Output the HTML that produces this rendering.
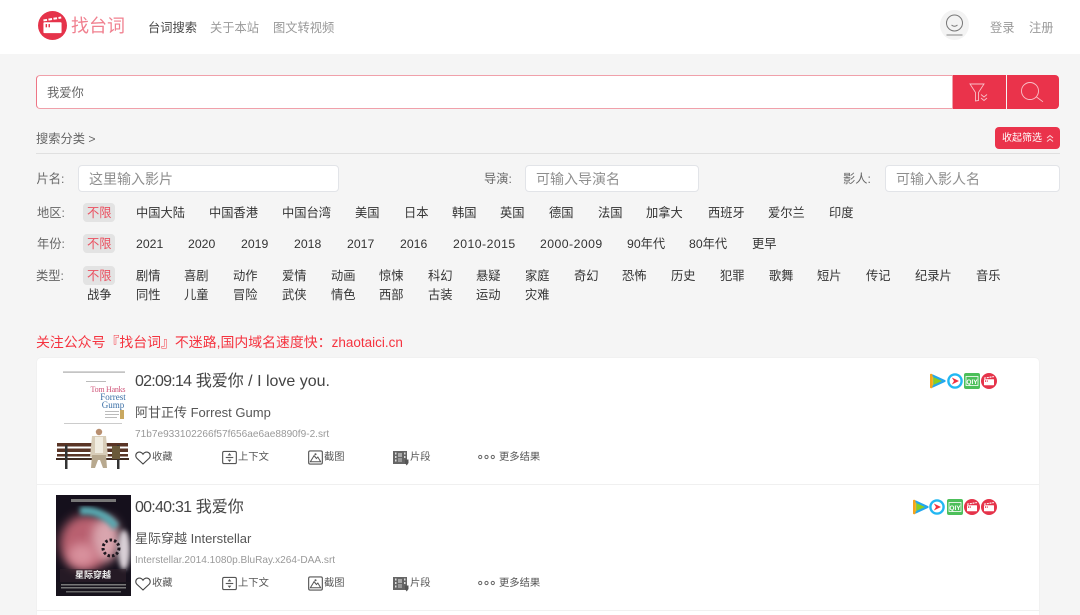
<!DOCTYPE html>
<html lang="zh"><head><meta charset="utf-8"><title>找台词</title>
<style>
html,body{margin:0;padding:0;width:1080px;height:615px;overflow:hidden}
body{background:#f5f5f5;position:relative;font-family:"Liberation Sans","Noto Sans CJK SC",sans-serif;font-size:12.25px;color:#333}
#w{position:absolute;left:0;top:0;width:1080px;height:615px;overflow:hidden;filter:blur(.3px)}
.a{position:absolute}
.t{position:absolute;white-space:nowrap;line-height:20px;height:20px}
.l{color:#666}
.n{color:#999}
.in{position:absolute;top:165px;height:25px;background:#fff;border:1px solid #e2e4e8;border-radius:4px;line-height:27px;font-size:14px;color:#8f8f8f;padding-left:10px;box-sizing:content-box}
.ttl{font-size:16px;color:#444}
.ttl b{font-weight:normal;letter-spacing:-.75px}
.sub{font-size:13px;color:#555}
.srt{font-size:10.1px;color:#999}
.act{font-size:10.3px;color:#555}
.rng{letter-spacing:.45px}
svg{position:absolute;display:block;overflow:visible}
</style></head><body><div id="w">
<svg width="0" height="0" style="position:absolute">
<defs>
<symbol id="clap" viewBox="0 0 16 16"><circle cx="8" cy="8" r="8" fill="#e5334a"/><rect x="3" y="6.200" width="10" height="6" rx=".5" fill="#fff"/><path d="M3 5.200L12.800 3.600" stroke="#fff" stroke-width="1.100" stroke-dasharray="2 .8"/><rect x="4.200" y="7.200" width=".8" height="1.800" fill="#e5334a"/><rect x="5.800" y="7.200" width=".8" height="1.800" fill="#e5334a"/></symbol>
<symbol id="tx" viewBox="0 0 16 16"><path d="M2.500 2.500L14.500 8L2.500 13.500Z" fill="#8ccf1f" stroke="#22a7ee" stroke-width="2.200" stroke-linejoin="round"/><path d="M1.200 2V14" stroke="#f7a31c" stroke-width="2.600" stroke-linecap="round"/><path d="M2.800 3.500V12.500" stroke="#f7c31c" stroke-width="1"/></symbol>
<symbol id="yk" viewBox="0 0 16 16"><circle cx="8" cy="8" r="6.600" fill="#fff" stroke="#21b7f2" stroke-width="2.400"/><path d="M4.800 4.500L12 8L4.800 11.500L7 8Z" fill="#f0303f"/></symbol>
<symbol id="iq" viewBox="0 0 16 16"><rect width="16" height="16" rx="2" fill="#4cbf5a"/><rect x="2" y="3.500" width="12" height="9" fill="none" stroke="#fff" stroke-width=".8"/><text x="8" y="10.800" font-size="6.500" font-weight="bold" fill="#fff" text-anchor="middle" font-family="Liberation Sans">QIY</text></symbol>
<symbol id="heart" viewBox="0 0 16 14"><path d="M8 13L2 7.400C.2 5.600.5 2.800 2.400 1.600 4.300.5 6.700 1 8 3.200 9.300 1 11.700.5 13.600 1.600 15.500 2.800 15.800 5.600 14 7.400Z" fill="none" stroke="#444" stroke-width="1.100"/></symbol>
<symbol id="ctx" viewBox="0 0 16 16"><rect x=".7" y="1.500" width="14.600" height="13" rx="1.500" fill="none" stroke="#555" stroke-width="1.200"/><path d="M4 8H12" stroke="#555" stroke-width="1.200"/><path d="M8 3.200L10 5.800H6ZM8 12.800L10 10.200H6Z" fill="#555"/></symbol>
<symbol id="pic" viewBox="0 0 16 16"><rect x=".7" y="1" width="14.600" height="14" rx="1.500" fill="none" stroke="#555" stroke-width="1.200"/><path d="M2.500 12.500L6.500 6L9 9L10.500 7.500L13.500 12.500Z" fill="none" stroke="#555" stroke-width="1.100"/><circle cx="8" cy="4.500" r="1.100" fill="#555"/></symbol>
<symbol id="film" viewBox="0 0 16 16"><rect x="0" y="1" width="14" height="13" fill="#666"/><path d="M2 2.500h1.500v2H2zM2 6h1.500v2H2zM2 9.500h1.500v2H2zM11 2.500h1.500v2H11zM11 6h1.500v2H11z" fill="#ddd"/><rect x="5" y="3" width="4" height="4" fill="#aaa"/><rect x="5" y="8" width="4" height="4" fill="#999"/><path d="M12 9.500h3.500v3.500l-1.800 2.500-1.700-2.500z" fill="#555"/></symbol>
<symbol id="dots" viewBox="0 0 17 6"><circle cx="2.200" cy="3" r="1.600" fill="none" stroke="#666"/><circle cx="8.500" cy="3" r="1.600" fill="none" stroke="#666"/><circle cx="14.800" cy="3" r="1.600" fill="none" stroke="#666"/></symbol>
<filter id="b2" x="-30%" y="-30%" width="160%" height="160%"><feGaussianBlur stdDeviation="5"/></filter>
<filter id="b1" x="-30%" y="-30%" width="160%" height="160%"><feGaussianBlur stdDeviation="2.500"/></filter>
<clipPath id="pc"><rect width="75" height="101"/></clipPath>
</defs></svg>

<!-- header -->
<div class="a" style="left:0;top:0;width:1080px;height:54px;background:#fff"></div>
<svg style="left:38px;top:11px" width="29" height="29" viewBox="0 0 16 16"><use href="#clap"/></svg>
<div class="t" style="left:71px;top:16px;font-size:18px;color:#f0808f">找台词</div>
<div class="t" style="left:148px;top:18px;color:#444">台词搜索</div>
<div class="t n" style="left:210px;top:18px">关于本站</div>
<div class="t n" style="left:273px;top:18px">图文转视频</div>
<div class="a" style="left:940px;top:10px;width:29px;height:30px;border-radius:50%;background:#f3f3f3"></div>
<svg style="left:940px;top:10px" width="29" height="30" viewBox="0 0 29 30"><circle cx="14.500" cy="13" r="8" fill="none" stroke="#777"/><path d="M11.500 15Q14.500 17.500 17.500 15" fill="none" stroke="#777"/><path d="M6.500 25H22.500" stroke="#999" stroke-width="1.200"/></svg>
<div class="t n" style="left:990px;top:18px">登录</div>
<div class="t n" style="left:1029px;top:18px">注册</div>

<!-- search -->
<div class="a" style="left:36px;top:75px;width:917px;height:34px;box-sizing:border-box;background:#fff;border:1px solid #f0a0aa;border-left-color:#ee7585;border-radius:4px 0 0 4px"></div>
<div class="t" style="left:47px;top:83px;color:#666">我爱你</div>
<div class="a" style="left:953px;top:75px;width:52.500px;height:34px;background:#ea334b"></div>
<div class="a" style="left:1007px;top:75px;width:52px;height:34px;background:#ea334b;border-radius:0 4px 4px 0"></div>
<svg style="left:953px;top:75px" width="53" height="34" viewBox="0 0 53 34"><path d="M17 9H31L25.500 17.500V25.500L22.500 26V17.500Z" fill="none" stroke="#f9c0c8" stroke-width=".9"/><path d="M28 19.500L31 22L34 19.500M28 23L31 25.500L34 23" fill="none" stroke="#f9c0c8" stroke-width=".9"/></svg>
<svg style="left:1007px;top:75px" width="52" height="34" viewBox="0 0 52 34"><circle cx="23" cy="16" r="8.500" fill="none" stroke="#f9c0c8" stroke-width=".9"/><path d="M29.500 22L36 26.800" stroke="#f9c0c8" stroke-width=".9"/></svg>

<div class="t" style="left:36px;top:129px;color:#666">搜索分类 &gt;</div>
<div class="a" style="left:995px;top:127px;width:65px;height:22px;background:#ea334b;border-radius:4px"></div>
<div class="t" style="left:1002px;top:129px;font-size:10px;color:#fff">收起筛选</div>
<svg style="left:1045px;top:134px" width="10" height="9" viewBox="0 0 10 9"><path d="M2 4L5 1.500L8 4M2 7.500L5 5L8 7.500" fill="none" stroke="#fbd5da"/></svg>
<div class="a" style="left:36px;top:153px;width:1024px;height:1px;background:#e0e0e0"></div>

<!-- filter inputs -->
<div class="t l" style="left:36.500px;top:169px">片名:</div>
<div class="in" style="left:78px;width:249px">这里输入影片</div>
<div class="t l" style="left:484px;top:169px">导演:</div>
<div class="in" style="left:525px;width:162px">可输入导演名</div>
<div class="t l" style="left:843px;top:169px">影人:</div>
<div class="in" style="left:885px;width:163px">可输入影人名</div>

<!-- region -->
<div class="t l" style="left:37px;top:203px">地区:</div>
<div class="a" style="left:83px;top:203px;width:32px;height:19px;background:#e3e3e3;border-radius:4px"></div>
<div class="t" style="left:87px;top:203px;color:#ea5060">不限</div>
<div class="t" style="left:136px;top:203px">中国大陆</div>
<div class="t" style="left:209px;top:203px">中国香港</div>
<div class="t" style="left:282px;top:203px">中国台湾</div>
<div class="t" style="left:355px;top:203px">美国</div>
<div class="t" style="left:404px;top:203px">日本</div>
<div class="t" style="left:452px;top:203px">韩国</div>
<div class="t" style="left:500px;top:203px">英国</div>
<div class="t" style="left:549px;top:203px">德国</div>
<div class="t" style="left:598px;top:203px">法国</div>
<div class="t" style="left:646px;top:203px">加拿大</div>
<div class="t" style="left:708px;top:203px">西班牙</div>
<div class="t" style="left:768px;top:203px">爱尔兰</div>
<div class="t" style="left:829px;top:203px">印度</div>

<!-- year -->
<div class="t l" style="left:37px;top:234px">年份:</div>
<div class="a" style="left:83px;top:234px;width:32px;height:19px;background:#e3e3e3;border-radius:4px"></div>
<div class="t" style="left:87px;top:234px;color:#ea5060">不限</div>
<div class="t" style="left:136px;top:234px">2021</div>
<div class="t" style="left:188px;top:234px">2020</div>
<div class="t" style="left:241px;top:234px">2019</div>
<div class="t" style="left:294px;top:234px">2018</div>
<div class="t" style="left:347px;top:234px">2017</div>
<div class="t" style="left:400px;top:234px">2016</div>
<div class="t rng" style="left:453px;top:234px">2010-2015</div>
<div class="t rng" style="left:540px;top:234px">2000-2009</div>
<div class="t" style="left:627px;top:234px">90年代</div>
<div class="t" style="left:689px;top:234px">80年代</div>
<div class="t" style="left:752px;top:234px">更早</div>

<!-- genre -->
<div class="t l" style="left:36px;top:266px">类型:</div>
<div class="a" style="left:83px;top:266px;width:32px;height:19px;background:#e3e3e3;border-radius:4px"></div>
<div class="t" style="left:87px;top:266px;color:#ea5060">不限</div>
<div class="t" style="left:136px;top:266px">剧情</div>
<div class="t" style="left:184px;top:266px">喜剧</div>
<div class="t" style="left:233px;top:266px">动作</div>
<div class="t" style="left:282px;top:266px">爱情</div>
<div class="t" style="left:331px;top:266px">动画</div>
<div class="t" style="left:379px;top:266px">惊悚</div>
<div class="t" style="left:428px;top:266px">科幻</div>
<div class="t" style="left:476px;top:266px">悬疑</div>
<div class="t" style="left:525px;top:266px">家庭</div>
<div class="t" style="left:574px;top:266px">奇幻</div>
<div class="t" style="left:622px;top:266px">恐怖</div>
<div class="t" style="left:671px;top:266px">历史</div>
<div class="t" style="left:720px;top:266px">犯罪</div>
<div class="t" style="left:769px;top:266px">歌舞</div>
<div class="t" style="left:817px;top:266px">短片</div>
<div class="t" style="left:866px;top:266px">传记</div>
<div class="t" style="left:915px;top:266px">纪录片</div>
<div class="t" style="left:976px;top:266px">音乐</div>
<div class="t" style="left:87px;top:285px">战争</div>
<div class="t" style="left:136px;top:285px">同性</div>
<div class="t" style="left:184px;top:285px">儿童</div>
<div class="t" style="left:233px;top:285px">冒险</div>
<div class="t" style="left:282px;top:285px">武侠</div>
<div class="t" style="left:331px;top:285px">情色</div>
<div class="t" style="left:379px;top:285px">西部</div>
<div class="t" style="left:428px;top:285px">古装</div>
<div class="t" style="left:476px;top:285px">运动</div>
<div class="t" style="left:525px;top:285px">灾难</div>

<div class="t" style="left:36px;top:332px;font-size:13.900px;color:#f5333f">关注公众号『找台词』不迷路,国内域名速度快：<span style="font-size:13.500px">zhaotaici.cn</span></div>

<!-- results card -->
<div class="a" style="left:37px;top:358px;width:1002px;height:257px;background:#fff;border-radius:4px 4px 0 0;box-shadow:0 0 1px #ddd"></div>
<div class="a" style="left:37px;top:484px;width:1002px;height:1px;background:#f0f0f0"></div>
<div class="a" style="left:37px;top:610px;width:1002px;height:1px;background:#f0f0f0"></div>

<!-- poster 1 -->
<svg style="left:56px;top:369px" width="75" height="101" viewBox="0 0 75 101">
<rect width="75" height="101" fill="#fff"/>
<rect x="7" y="2.500" width="62" height="1.200" fill="#aaa"/>
<rect x="30" y="12" width="20" height="1" fill="#bbb"/>
<text x="52" y="23" font-size="8" font-family="Liberation Serif" fill="#d0567a" text-anchor="middle" textLength="35">Tom Hanks</text>
<text x="57" y="31" font-size="9" font-family="Liberation Serif" fill="#3a6ea5" text-anchor="middle">Forrest</text>
<text x="57" y="39" font-size="9" font-family="Liberation Serif" fill="#3a6ea5" text-anchor="middle">Gump</text>
<rect x="49" y="42" width="14" height="1" fill="#bbb"/><rect x="49" y="45" width="14" height="1" fill="#bbb"/><rect x="49" y="48" width="12" height="1" fill="#bbb"/>
<rect x="64" y="41" width="4" height="9" fill="#c9a860"/>
<rect x="8" y="54" width="58" height="1" fill="#ccc"/>
<rect x="1" y="74" width="71" height="3.500" fill="#5a3526"/><rect x="1" y="79.500" width="71" height="3.500" fill="#5a3526"/><rect x="1" y="85" width="71" height="2.500" fill="#5a3526"/>
<rect x="0" y="89" width="73" height="2" fill="#3f2a20"/>
<rect x="9" y="76" width="2.500" height="24" fill="#333"/><rect x="61" y="76" width="2.500" height="24" fill="#333"/>
<rect x="56" y="77" width="8" height="13" fill="#6a5a3a"/>
<circle cx="43" cy="63" r="3.200" fill="#b88f70"/>
<path d="M36 67H50L52 88H34Z" fill="#d8cdb8"/>
<rect x="39" y="68" width="8" height="16" fill="#f0ece0"/>
<path d="M36 86H50L51 99H47L44 91H42L39 99H35Z" fill="#b8a98f"/>
</svg>

<div class="t ttl" style="left:135px;top:372px"><b>02:09:14</b> 我爱你 / I love you.</div>
<div class="t sub" style="left:135px;top:403px">阿甘正传 Forrest Gump</div>
<div class="t srt" style="left:135px;top:425px">71b7e933102266f57f656ae6ae8890f9-2.srt</div>

<svg style="left:135px;top:451px" width="16" height="14"><use href="#heart"/></svg>
<div class="t act" style="left:152px;top:448px">收藏</div>
<svg style="left:222px;top:450px" width="15" height="15"><use href="#ctx"/></svg>
<div class="t act" style="left:238px;top:448px">上下文</div>
<svg style="left:308px;top:450px" width="15" height="15"><use href="#pic"/></svg>
<div class="t act" style="left:324px;top:448px">截图</div>
<svg style="left:393px;top:450px" width="16" height="16"><use href="#film"/></svg>
<div class="t act" style="left:410px;top:448px">片段</div>
<svg style="left:478px;top:454px" width="17" height="6"><use href="#dots"/></svg>
<div class="t act" style="left:499px;top:448px">更多结果</div>

<svg style="left:930px;top:373px" width="16" height="16"><use href="#tx"/></svg>
<svg style="left:947px;top:373px" width="16" height="16"><use href="#yk"/></svg>
<svg style="left:964px;top:373px" width="16" height="16"><use href="#iq"/></svg>
<svg style="left:981px;top:373px" width="16" height="16"><use href="#clap"/></svg>

<!-- poster 2 -->
<svg style="left:56px;top:495px" width="75" height="101" viewBox="0 0 75 101">
<g clip-path="url(#pc)">
<rect width="75" height="101" fill="#15101c"/>
<ellipse cx="30" cy="48" rx="26" ry="28" fill="#b9606f" filter="url(#b2)"/>
<ellipse cx="50" cy="44" rx="14" ry="22" fill="#d9a5ae" filter="url(#b2)"/>
<ellipse cx="26" cy="60" rx="14" ry="12" fill="#d8909c" filter="url(#b2)"/>
<path d="M24 16Q46 14 60 32" fill="none" stroke="#58a8b0" stroke-width="8" filter="url(#b1)"/>
<ellipse cx="68" cy="55" rx="6" ry="20" fill="#d8cfd6" filter="url(#b1)"/>
<circle cx="55" cy="53" r="8" fill="none" stroke="#1f1820" stroke-width="3" stroke-dasharray="2.500 2"/>
<rect x="0" y="87" width="75" height="14" fill="#17131c"/>
<rect x="4" y="74" width="66" height="13" fill="#31222c" opacity=".6"/>
<text x="37" y="83" font-size="9" font-weight="bold" fill="#eee" text-anchor="middle" font-family="Liberation Sans,Noto Sans CJK SC">星际穿越</text>
<rect x="5" y="89" width="65" height="1.500" fill="#777"/><rect x="5" y="92" width="65" height="1.500" fill="#777"/><rect x="10" y="96" width="55" height="1.500" fill="#666"/>
<rect x="15" y="4" width="45" height="3" fill="#777"/>
</g></svg>

<div class="t ttl" style="left:135px;top:498px"><b>00:40:31</b> 我爱你</div>
<div class="t sub" style="left:135px;top:529px">星际穿越 Interstellar</div>
<div class="t srt" style="left:135px;top:551px">Interstellar.2014.1080p.BluRay.x264-DAA.srt</div>

<svg style="left:135px;top:577px" width="16" height="14"><use href="#heart"/></svg>
<div class="t act" style="left:152px;top:574px">收藏</div>
<svg style="left:222px;top:576px" width="15" height="15"><use href="#ctx"/></svg>
<div class="t act" style="left:238px;top:574px">上下文</div>
<svg style="left:308px;top:576px" width="15" height="15"><use href="#pic"/></svg>
<div class="t act" style="left:324px;top:574px">截图</div>
<svg style="left:393px;top:576px" width="16" height="16"><use href="#film"/></svg>
<div class="t act" style="left:410px;top:574px">片段</div>
<svg style="left:478px;top:580px" width="17" height="6"><use href="#dots"/></svg>
<div class="t act" style="left:499px;top:574px">更多结果</div>

<svg style="left:913px;top:499px" width="16" height="16"><use href="#tx"/></svg>
<svg style="left:929px;top:499px" width="16" height="16"><use href="#yk"/></svg>
<svg style="left:947px;top:499px" width="16" height="16"><use href="#iq"/></svg>
<svg style="left:964px;top:499px" width="16" height="16"><use href="#clap"/></svg>
<svg style="left:981px;top:499px" width="16" height="16"><use href="#clap"/></svg>
</div></body></html>
